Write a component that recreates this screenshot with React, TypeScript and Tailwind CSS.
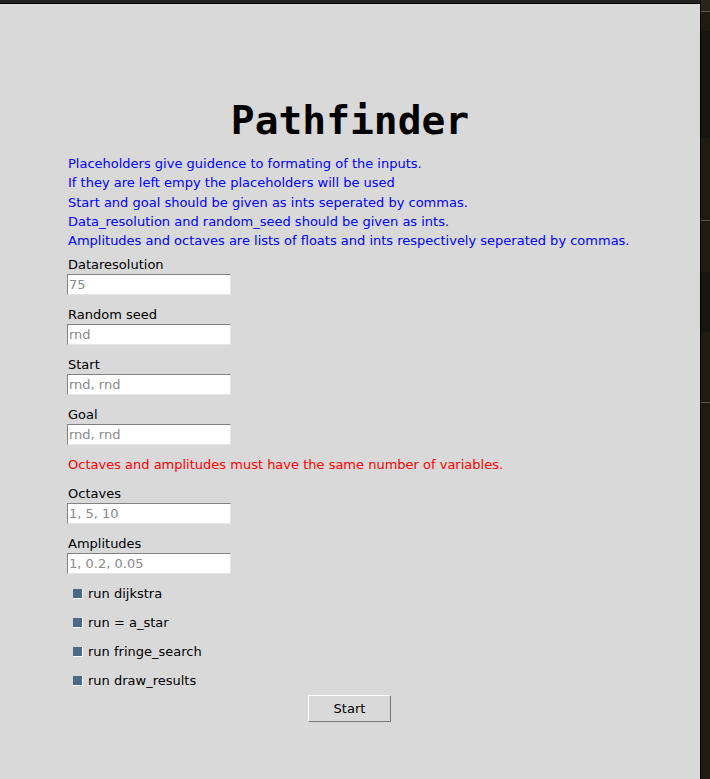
import React from "react";

const info = [
  "Placeholders give guidence to formating of the inputs.",
  "If they are left empy the placeholders will be used",
  "Start and goal should be given as ints seperated by commas.",
  "Data_resolution and random_seed should be given as ints.",
  "Amplitudes and octaves are lists of floats and ints respectively seperated by commas.",
];

function Field({ label, placeholder }: { label: string; placeholder: string }) {
  return (
    <div className="flex flex-col items-start">
      <div className="h-[19px] leading-[19px] pl-[1px] text-black">{label}</div>
      <input
        placeholder={placeholder}
        className="h-[21px] w-[164px] bg-white border border-t-[#828282] border-l-[#828282] border-r-[#e6e6e6] border-b-[#e6e6e6] px-[1px] text-[13px] text-black placeholder:text-[#8a8a8a] outline-none"
        style={{ fontFamily: '"DejaVu Sans", sans-serif' }}
      />
    </div>
  );
}

function Check({ label }: { label: string }) {
  return (
    <div className="h-[29px] flex items-center gap-[5px] pl-[6px]">
      <div className="w-[10px] h-[10px] bg-[#4a6984] border-r border-b border-white" />
      <span className="text-black">{label}</span>
    </div>
  );
}

export default function App() {
  return (
    <div
      className="flex w-[710px] h-[779px] overflow-hidden text-[13px]"
      style={{ fontFamily: '"DejaVu Sans", sans-serif' }}
    >
      <div className="w-[700px] flex flex-col">
        <div className="h-[3px] bg-[#232323]" />
        <div className="h-[1px] bg-black" />
        <div className="flex-1 bg-[#d9d9d9] flex flex-col">
          <h1
            className="mt-[91px] h-[50px] leading-[50px] text-center text-[39.6px] font-bold text-black"
            style={{ fontFamily: '"DejaVu Sans Mono", monospace' }}
          >
            Pathfinder
          </h1>
          <div className="mt-[9px] pl-[68px] flex flex-col text-[#0000ff]">
            {info.map((l) => (
              <div key={l} className="h-[19.25px] leading-[19px]">
                {l}
              </div>
            ))}
          </div>
          <div className="mt-[5px] pl-[67px] flex flex-col gap-[10px]">
            <Field label="Dataresolution" placeholder="75" />
            <Field label="Random seed" placeholder="rnd" />
            <Field label="Start" placeholder="rnd, rnd" />
            <Field label="Goal" placeholder="rnd, rnd" />
            <div className="h-[19px] leading-[19px] pl-[1px] text-[#ff0000]">
              Octaves and amplitudes must have the same number of variables.
            </div>
            <Field label="Octaves" placeholder="1, 5, 10" />
            <Field label="Amplitudes" placeholder="1, 0.2, 0.05" />
          </div>
          <div className="mt-[5px] pl-[67px] flex flex-col">
            <Check label="run dijkstra" />
            <Check label="run = a_star" />
            <Check label="run fringe_search" />
            <Check label="run draw_results" />
          </div>
          <div className="flex pl-[308px]">
            <button className="w-[83px] h-[27px] bg-[#d9d9d9] border border-t-white border-l-white border-r-[#7a7a7a] border-b-[#7a7a7a] text-black text-[13px]">
              Start
            </button>
          </div>
        </div>
      </div>
      <div className="w-[1px] bg-black" />
      <div className="w-[9px] flex flex-col bg-[#1f1b10]">
        <div className="h-[11px] bg-[#28241a]" />
        <div className="h-[1px] bg-[#5a564c]" />
        <div className="h-[19px]" />
        <div className="h-[107px] bg-[#171510]" />
        <div className="h-[82px]" />
        <div className="h-[1px] bg-[#5a564c]" />
        <div className="h-[51px]" />
        <div className="h-[60px] bg-[#171510]" />
        <div className="h-[70px]" />
        <div className="h-[1px] bg-[#5a564c]" />
      </div>
    </div>
  );
}
